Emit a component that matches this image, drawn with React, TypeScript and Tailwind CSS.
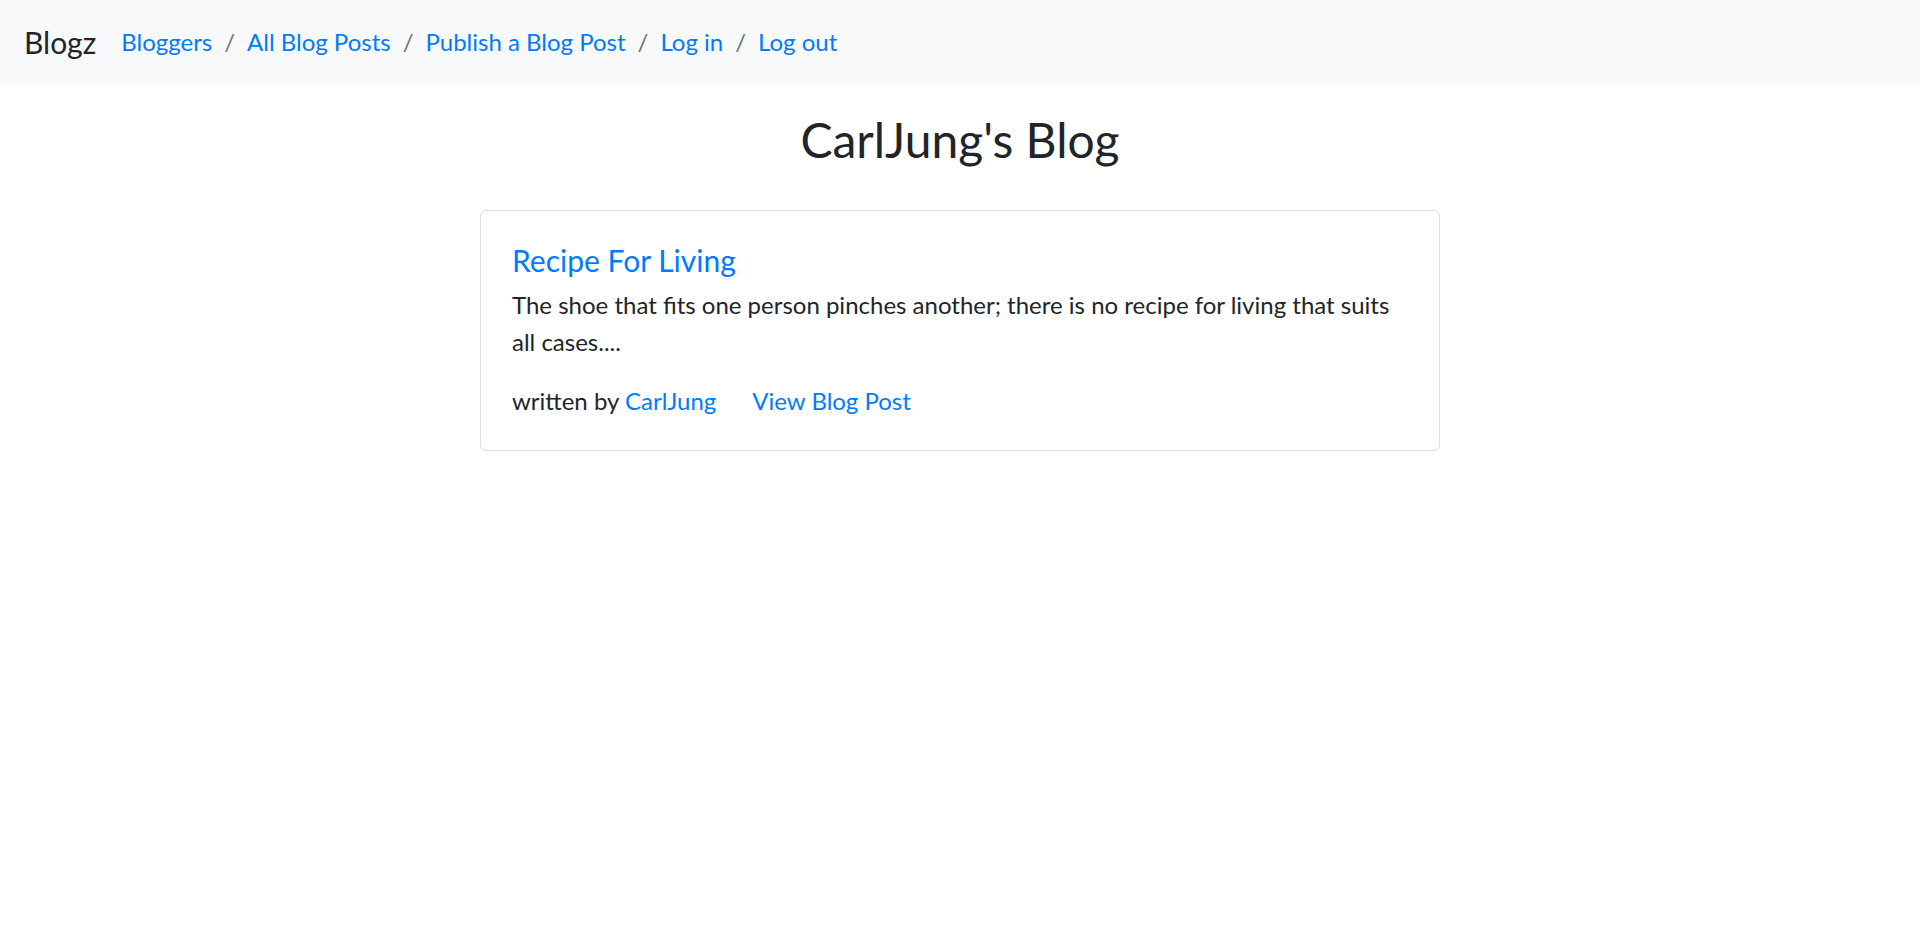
export default function App() {
  const links = ["Bloggers", "All Blog Posts", "Publish a Blog Post", "Log in", "Log out"];

  return (
    <div className="min-h-screen bg-white text-[#212529] font-['Lato','Open_Sans',sans-serif]">
      <nav className="flex h-[84px] items-center bg-[#f8f9fa] px-6">
        <a href="#" className="mr-[25px] text-[30px] leading-none text-[#212529]">
          Blogz
        </a>
        <ol className="flex items-center text-[24px]">
          {links.map((l, i) => (
            <li key={l} className="flex items-center">
              {i > 0 && <span className="px-3 text-[#6c757d]">/</span>}
              <a href="#" className="text-[#007bff]">
                {l}
              </a>
            </li>
          ))}
        </ol>
      </nav>

      <h1 className="mt-[27px] text-center text-[48px] leading-[58px] font-normal">CarlJung's Blog</h1>

      <div className="mx-auto mt-[41px] w-[960px] rounded-[6px] border border-[#dfdfdf] px-[31px] pt-[31px] pb-[30px]">
        <h5 className="text-[30px] leading-[36px] text-[#007bff]">Recipe For Living</h5>
        <p className="mt-2 text-[24px] leading-[37px]">
          The shoe that fits one person pinches another; there is no recipe for living that suits all cases....
        </p>
        <div className="mt-[22px] flex text-[24px] leading-[38px]">
          <span>
            written by <a href="#" className="text-[#007bff]">CarlJung</a>
          </span>
          <a href="#" className="ml-9 text-[#007bff]">
            View Blog Post
          </a>
        </div>
      </div>
    </div>
  );
}
